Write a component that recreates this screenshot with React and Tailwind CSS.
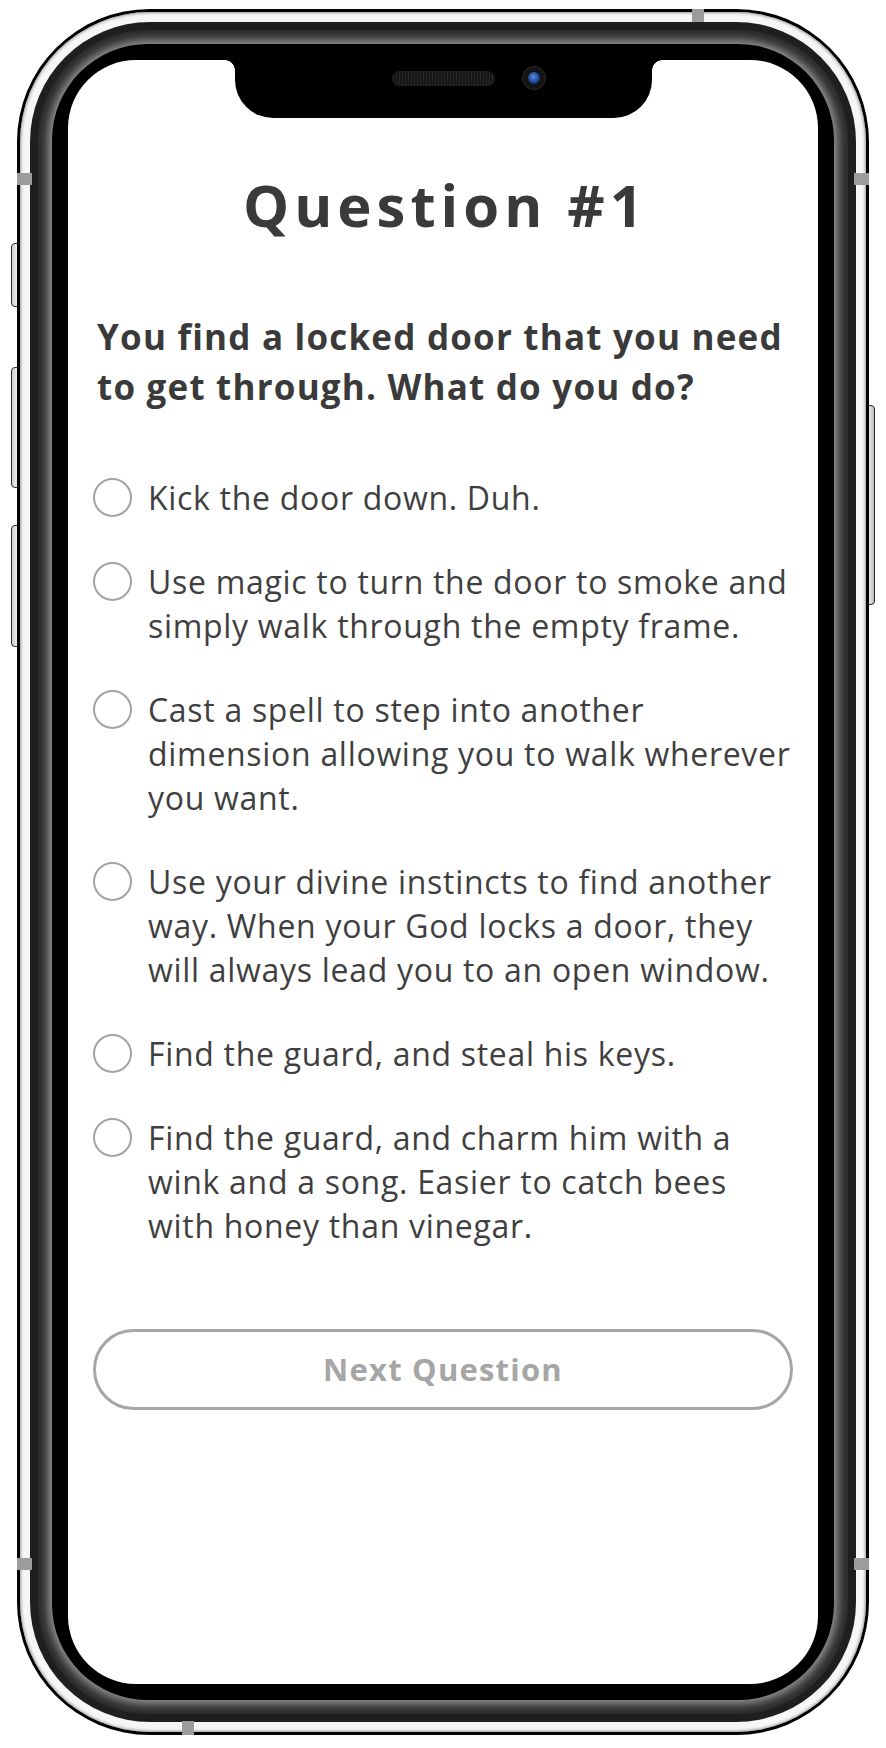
import React from "react";

const options = [
  ["Kick the door down. Duh."],
  ["Use magic to turn the door to smoke and", "simply walk through the empty frame."],
  ["Cast a spell to step into another", "dimension allowing you to walk wherever", "you want."],
  ["Use your divine instincts to find another", "way. When your God locks a door, they", "will always lead you to an open window."],
  ["Find the guard, and steal his keys."],
  ["Find the guard, and charm him with a", "wink and a song. Easier to catch bees", "with honey than vinegar."],
];

function Mark({ className }) {
  return <div className={"absolute bg-[#9c9c9c] z-20 " + className} />;
}

export default function App() {
  return (
    <div
      className="w-[886px] h-[1748px] bg-white overflow-hidden pt-[9px] pl-[17px]"
      style={{ fontFamily: '"Open Sans", "Noto Sans", sans-serif' }}
    >
      <div className="relative w-[852px] h-[1726px]">
        {/* side buttons */}
        <div className="absolute left-[-6px] top-[234px] w-[8px] h-[64px] rounded-l-[4px] border border-[#2a2a2a] bg-gradient-to-r from-[#cfcfcf] to-[#f2f2f2]" />
        <div className="absolute left-[-6px] top-[358px] w-[8px] h-[121px] rounded-l-[4px] border border-[#2a2a2a] bg-gradient-to-r from-[#cfcfcf] to-[#f2f2f2]" />
        <div className="absolute left-[-6px] top-[516px] w-[8px] h-[122px] rounded-l-[4px] border border-[#2a2a2a] bg-gradient-to-r from-[#cfcfcf] to-[#f2f2f2]" />
        <div className="absolute right-[-6px] top-[396px] w-[8px] h-[200px] rounded-r-[4px] border border-[#2a2a2a] bg-gradient-to-l from-[#bdbdbd] to-[#efefef]" />

        {/* antenna marks */}
        <Mark className="left-0 top-[164px] w-[15px] h-[12px]" />
        <Mark className="right-0 top-[164px] w-[15px] h-[12px]" />
        <Mark className="left-0 top-[1549px] w-[15px] h-[12px]" />
        <Mark className="right-0 top-[1549px] w-[15px] h-[12px]" />
        <Mark className="left-[675px] top-0 w-[12px] h-[13px]" />
        <Mark className="left-[165px] bottom-0 w-[12px] h-[14px]" />

        <div className="relative z-10 w-full h-full rounded-[133px] bg-black p-[3px]">
          <div className="w-full h-full rounded-[130px] bg-[#f6f6f6] p-[10px] shadow-[inset_0_0_3px_1px_#9a9a9a]">
            <div className="w-full h-full rounded-[120px] bg-[#1f1f1f] p-[8px]">
              <div className="w-full h-full rounded-[110px] bg-[#2c2c2c] p-[14px]">
                <div className="w-full h-full rounded-[96px] bg-black p-[16px] shadow-[0_0_10px_4px_#969696]">
                  <div className="relative w-full h-full rounded-[68px] bg-white overflow-hidden">
                    {/* notch */}
                    <div className="absolute top-0 left-[167px] w-[417px] h-[58px] bg-black rounded-b-[38px] flex items-start pl-[157px] pt-[6px]">
                      <div className="absolute top-0 left-[-10px] w-[10px] h-[10px] bg-[radial-gradient(circle_at_0_100%,transparent_9.5px,black_10px)]" />
                      <div className="absolute top-0 right-[-10px] w-[10px] h-[10px] bg-[radial-gradient(circle_at_100%_100%,transparent_9.5px,black_10px)]" />
                      <div className="flex items-center gap-[27px] h-[24px]">
                        <div className="w-[103px] h-[15px] rounded-full bg-[repeating-linear-gradient(90deg,#262626_0_1px,#161616_1px_3px)] border border-[#202020]" />
                        <div className="w-[24px] h-[24px] rounded-full bg-[#141414] border border-[#2a2a2a] flex items-center justify-center">
                          <div className="w-[12px] h-[12px] rounded-full bg-[radial-gradient(circle_at_45%_40%,#5b8fe0,#1d4690_55%,#0b1836)]" />
                        </div>
                      </div>
                    </div>

                    {/* content */}
                    <div className="flex flex-col px-[25px] pt-[113px] text-[#3d3d3d]">
                      <h1 className="text-center text-[58px] leading-[64px] font-bold tracking-[5px] pl-[5px] text-[#3a3a3a]">
                        Question #1
                      </h1>
                      <p className="mt-[75px] px-[4px] text-[35px] leading-[50px] font-bold tracking-[1.2px] text-[#3a3a3a]">
                        <span className="block whitespace-nowrap">You find a locked door that you need</span>
                        <span className="block whitespace-nowrap">to get through. What do you do?</span>
                      </p>
                      <div className="mt-[64px] flex flex-col gap-[40px]">
                        {options.map((lines, i) => (
                          <div key={i} className="flex items-start gap-[16px]">
                            <div className="mt-[2px] w-[39px] h-[39px] shrink-0 rounded-full border-2 border-[#a3a3a3]" />
                            <div className="text-[32px] leading-[44px] tracking-[0.7px] text-[#3f3f3f]">
                              {lines.map((l, j) => (
                                <span key={j} className="block whitespace-nowrap">{l}</span>
                              ))}
                            </div>
                          </div>
                        ))}
                      </div>
                      <button className="mt-[81px] h-[81px] w-full rounded-full border-[3px] border-[#a6a6a6] bg-white text-[31px] font-bold tracking-[1.2px] text-[#a6a6a6]">
                        Next Question
                      </button>
                    </div>
                  </div>
                </div>
              </div>
            </div>
          </div>
        </div>
      </div>
    </div>
  );
}
